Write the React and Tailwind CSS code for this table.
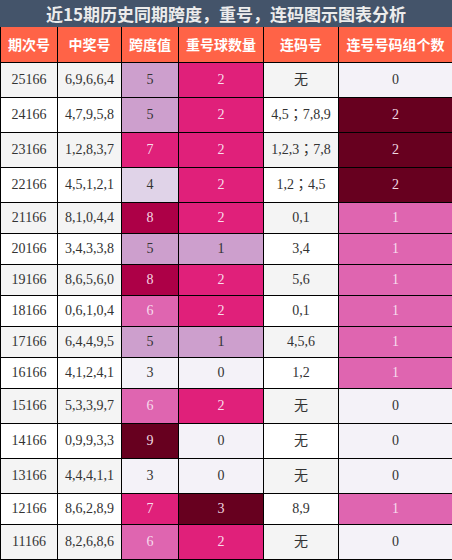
import React from "react";

const rows = [
  ["25166", "6,9,6,6,4", 5, 2, "无", 0],
  ["24166", "4,7,9,5,8", 5, 2, "4,5；7,8,9", 2],
  ["23166", "1,2,8,3,7", 7, 2, "1,2,3；7,8", 2],
  ["22166", "4,5,1,2,1", 4, 2, "1,2；4,5", 2],
  ["21166", "8,1,0,4,4", 8, 2, "0,1", 1],
  ["20166", "3,4,3,3,8", 5, 1, "3,4", 1],
  ["19166", "8,6,5,6,0", 8, 2, "5,6", 1],
  ["18166", "0,6,1,0,4", 6, 2, "0,1", 1],
  ["17166", "6,4,4,9,5", 5, 1, "4,5,6", 1],
  ["16166", "4,1,2,4,1", 3, 0, "1,2", 1],
  ["15166", "5,3,3,9,7", 6, 2, "无", 0],
  ["14166", "0,9,9,3,3", 9, 0, "无", 0],
  ["13166", "4,4,4,1,1", 3, 0, "无", 0],
  ["12166", "8,6,2,8,9", 7, 3, "8,9", 1],
  ["11166", "8,2,6,8,6", 6, 2, "无", 0],
];

// colour scale shared by the three numeric columns
const LIGHT = "bg-[#f4f2f8] text-[#333]";
const PALE = "bg-[#e0d3e8] text-[#333]";
const LAV = "bg-[#cd9fcd] text-[#333]";
const ROSE = "bg-[#df65b0] text-[#f7dced]";
const PINK = "bg-[#e0207a] text-[#f9dcea]";
const CRIMSON = "bg-[#ad0047] text-[#f5d5e2]";
const DARK = "bg-[#67001f] text-[#f0d8e0]";

const spanColor = { 3: LIGHT, 4: PALE, 5: LAV, 6: ROSE, 7: PINK, 8: CRIMSON, 9: DARK };
const repeatColor = { 0: LIGHT, 1: LAV, 2: PINK, 3: DARK };
const countColor = { 0: LIGHT, 1: ROSE, 2: DARK };

const headers = ["期次号", "中奖号", "跨度值", "重号球数量", "连码号", "连号号码组个数"];

const cell = "border border-black text-center p-0";

const App = () => {
  return (
    <div className="w-[452px] bg-white font-['Liberation_Serif','Noto_Sans_CJK_TC',serif]">
      <div className="h-[27px] bg-[#44546a] text-[#ececec] text-[17px] font-bold leading-[27px] text-center font-['Noto_Sans_CJK_SC',sans-serif]">
        近15期历史同期跨度，重号，连码图示图表分析
      </div>
      <table className="w-[452px] table-fixed border-collapse text-[14px]">
        <colgroup>
          <col className="w-[57px]" />
          <col className="w-[64px]" />
          <col className="w-[57px]" />
          <col className="w-[85px]" />
          <col className="w-[75px]" />
          <col className="w-[114px]" />
        </colgroup>
        <thead>
          <tr className="h-[35px] bg-[#ff6347]">
            {headers.map((h) => (
              <th
                key={h}
                className="border-x border-black p-0 text-center text-white text-[14px] font-bold font-['Noto_Sans_CJK_SC',sans-serif]"
              >
                {h}
              </th>
            ))}
          </tr>
        </thead>
        <tbody>
          {rows.map(([issue, nums, span, rep, lian, cnt], i) => {
            const tall = lian === "无" || lian.includes("；");
            const zebra = i % 2 === 0 ? "bg-[#f4f4f4]" : "bg-white";
            return (
              <tr key={issue} className={tall ? "h-[35px]" : "h-[31px]"}>
                <td className={`${cell} ${zebra} text-[#333]`}>{issue}</td>
                <td className={`${cell} ${zebra} text-[#333]`}>{nums}</td>
                <td className={`${cell} ${spanColor[span]}`}>{span}</td>
                <td className={`${cell} ${repeatColor[rep]}`}>{rep}</td>
                <td className={`${cell} ${zebra} text-[#333]`}>{lian}</td>
                <td className={`${cell} ${countColor[cnt]}`}>{cnt}</td>
              </tr>
            );
          })}
        </tbody>
      </table>
    </div>
  );
};

export default App;
